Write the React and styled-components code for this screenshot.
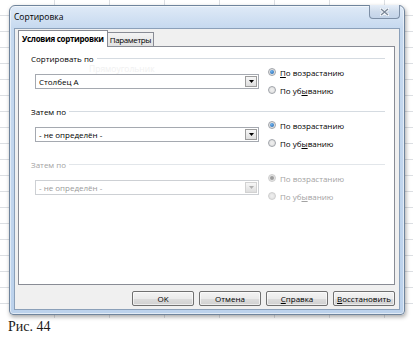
import React from 'react'
import styled, { createGlobalStyle } from 'styled-components'

const GlobalStyle = createGlobalStyle`
  body {
    margin: 0;
    background: #fff;
    font-family: "Open Sans", "Noto Sans", sans-serif;
  }
`;

// the spreadsheet behind the dialog
const Shot = styled.div`
  width: 413px;
  height: 318px;
  box-sizing: border-box;
  padding: 5px 8px 3px 9px;
  background-color: #fff;
  background-image:
    repeating-linear-gradient(90deg, transparent 0 54px, #dcdfe3 54px 55px),
    repeating-linear-gradient(180deg, transparent 0 15px, #dcdfe3 15px 16px);
`;

const Window = styled.div`
  width: 396px;
  height: 310px;
  box-sizing: border-box;
  border: 1px solid #6f849c;
  border-radius: 6px 6px 4px 4px;
  background: linear-gradient(180deg, #dfeaf7 0%, #c6d9ef 22px, #bcd2ec 100%);
  padding: 0 4px 4px 4px;
  display: flex;
  flex-direction: column;
  box-shadow: 1px 2px 4px rgba(0, 0, 0, 0.35), inset 0 0 0 1px rgba(255, 255, 255, 0.55);
`;

const TitleBar = styled.div`
  height: 22px;
  display: flex;
  justify-content: space-between;
  align-items: flex-start;
`;

const Title = styled.span`
  font-size: 8.5px;
  line-height: 22px;
  color: #000;
`;

const CloseButton = styled.div`
  width: 31px;
  height: 14px;
  margin-top: -1px;
  box-sizing: border-box;
  border: 1px solid #7d8fa6;
  border-top: none;
  border-radius: 0 0 4px 4px;
  background: linear-gradient(180deg, #e6eef8 0%, #cfdcec 50%, #c3d3e8 100%);
  display: flex;
  align-items: center;
  justify-content: center;
`;

const Client = styled.div`
  flex: 1;
  box-sizing: border-box;
  background: #f0f0f0;
  border: 1px solid #8ba0b9;
  padding: 1px 4px 3px 3px;
  display: flex;
  flex-direction: column;
`;

const TabRow = styled.div`
  display: flex;
  align-items: flex-end;
  height: 16px;
`;

const Tab = styled.div`
  position: relative;
  z-index: ${p => (p.$active ? 1 : 0)};
  box-sizing: border-box;
  height: ${p => (p.$active ? '17px' : '14px')};
  margin-bottom: ${p => (p.$active ? '-1px' : '0')};
  padding: 0 ${p => (p.$active ? '3px' : '2px')};
  border: 1px solid #898c95;
  border-bottom: none;
  border-left: ${p => (p.$active ? '1px solid #898c95' : 'none')};
  background: ${p => (p.$active ? '#fff' : 'linear-gradient(180deg, #f3f3f3, #e2e2e2)')};
  font-size: 8px;
  font-weight: ${p => (p.$active ? 700 : 400)};
  letter-spacing: ${p => (p.$active ? '-0.3px' : '-0.4px')};
  line-height: ${p => (p.$active ? '15px' : '13px')};
  color: #000;
  white-space: nowrap;
`;

const TabPage = styled.div`
  position: relative;
  flex: 1;
  background: #fff;
  border: 1px solid #898c95;
  padding: 5px 9px 0 12px;
`;

const Ghost = styled.span`
  position: absolute;
  top: 16px;
  left: 70px;
  font-size: 8.5px;
  color: #f1f1f1;
`;

const Section = styled.div`
  margin-bottom: 7px;
`;

const Header = styled.div`
  display: flex;
  align-items: center;
  gap: 3px;
  height: 12px;
  font-size: 8px;
  color: ${p => (p.$disabled ? '#a3a3a3' : '#000')};
`;

const Rule = styled.div`
  flex: 1;
  height: 1px;
  background: ${p => (p.$disabled ? '#e2e6ea' : '#d5dbe1')};
`;

const Row = styled.div`
  display: flex;
  align-items: center;
  height: 34px;
`;

const Combo = styled.div`
  margin-left: 4px;
  width: 224px;
  height: 15px;
  box-sizing: border-box;
  border: 1px solid ${p => (p.$disabled ? '#cdd0d4' : '#a5a9b0')};
  background: #fff;
  display: flex;
  align-items: center;
`;

const ComboText = styled.span`
  flex: 1;
  padding-left: 3px;
  font-size: 8px;
  color: ${p => (p.$disabled ? '#9a9a9a' : '#000')};
`;

const DropButton = styled.div`
  width: 12px;
  height: 11px;
  margin-right: 1px;
  box-sizing: border-box;
  border: 1px solid ${p => (p.$disabled ? '#d2d2d2' : '#9c9c9c')};
  background: linear-gradient(180deg, #f7f7f7, #dedede);
  display: flex;
  align-items: center;
  justify-content: center;
`;

const Radios = styled.div`
  margin-left: 9px;
  display: flex;
  flex-direction: column;
  gap: 4px;
`;

const RadioItem = styled.label`
  display: flex;
  align-items: center;
  gap: 4px;
  height: 14px;
  font-size: 8px;
  color: ${p => (p.$disabled ? '#a3a3a3' : '#000')};

  u {
    text-underline-offset: 1px;
  }
`;

const Dot = styled.span`
  width: 8px;
  height: 8px;
  box-sizing: border-box;
  border-radius: 50%;
  border: 1px solid ${p => (p.$disabled ? '#cfcfcf' : '#a0a4aa')};
  background: radial-gradient(circle, #f0f0f0 0%, #dcdcdc 100%);
  display: flex;
  align-items: center;
  justify-content: center;

  &::after {
    content: '';
    display: ${p => (p.$checked ? 'block' : 'none')};
    width: 4px;
    height: 4px;
    border-radius: 50%;
    background: ${p => (p.$disabled ? '#9d9d9d' : 'radial-gradient(circle at 40% 35%, #6fb3ef, #1a5ea8)')};
  }
`;

const ButtonRow = styled.div`
  margin-top: 6px;
  display: flex;
  justify-content: flex-end;
  gap: 5px;
`;

const Button = styled.div`
  width: 62px;
  height: 15px;
  box-sizing: border-box;
  border: 1px solid #707070;
  border-radius: 2px;
  background: linear-gradient(180deg, #f3f3f3 0%, #ebebeb 50%, #dddddd 51%, #d0d0d0 100%);
  box-shadow: inset 0 0 0 1px rgba(255, 255, 255, 0.6);
  font-size: 8px;
  line-height: 13px;
  text-align: center;
  color: #000;
  white-space: nowrap;
`;

const Caption = styled.div`
  padding: 1px 0 0 8px;
  font-family: "Liberation Serif", "Times New Roman", serif;
  font-size: 14px;
  color: #1c1a17;
`;

const Arrow = ({ disabled }) => (
  <svg width="5" height="3" viewBox="0 0 5 3">
    <path d="M0 0 H5 L2.5 3 Z" fill={disabled ? '#b0b0b0' : '#000'} />
  </svg>
);

const CloseGlyph = () => (
  <svg width="9" height="8" viewBox="0 0 9 8">
    <path d="M1 1 L8 7 M8 1 L1 7" stroke="#f4f7fb" strokeWidth="3" strokeLinecap="round" />
    <path d="M1 1 L8 7 M8 1 L1 7" stroke="#7b8797" strokeWidth="1.3" />
  </svg>
);

const sections = [
  { title: 'Сортировать по', value: 'Столбец А', hotkey: true },
  { title: 'Затем по', value: '- не определён -' },
  { title: 'Затем по', value: '- не определён -', disabled: true },
];

const SortSection = ({ title, value, hotkey, disabled }) => (
  <Section>
    <Header $disabled={disabled}>
      {title}
      <Rule $disabled={disabled} />
    </Header>
    <Row>
      <Combo $disabled={disabled}>
        <ComboText $disabled={disabled}>{value}</ComboText>
        <DropButton $disabled={disabled}>
          <Arrow disabled={disabled} />
        </DropButton>
      </Combo>
      <Radios>
        <RadioItem $disabled={disabled}>
          <Dot $checked $disabled={disabled} />
          <span>{hotkey ? <><u>П</u>о возрастанию</> : 'По возрастанию'}</span>
        </RadioItem>
        <RadioItem $disabled={disabled}>
          <Dot $disabled={disabled} />
          <span>По уб<u>ы</u>ванию</span>
        </RadioItem>
      </Radios>
    </Row>
  </Section>
);

const App = () => {
  return (
    <>
      <GlobalStyle />
      <Shot>
        <Window>
          <TitleBar>
            <Title>Сортировка</Title>
            <CloseButton>
              <CloseGlyph />
            </CloseButton>
          </TitleBar>
          <Client>
            <TabRow>
              <Tab $active>Условия сортировки</Tab>
              <Tab>Параметры</Tab>
            </TabRow>
            <TabPage>
              <Ghost>Прямоугольник</Ghost>
              {sections.map((s, i) => (
                <SortSection key={i} {...s} />
              ))}
            </TabPage>
            <ButtonRow>
              <Button>OK</Button>
              <Button>Отмена</Button>
              <Button><u>С</u>правка</Button>
              <Button><u>В</u>осстановить</Button>
            </ButtonRow>
          </Client>
        </Window>
      </Shot>
      <Caption>Рис. 44</Caption>
    </>
  )
}

export default App
